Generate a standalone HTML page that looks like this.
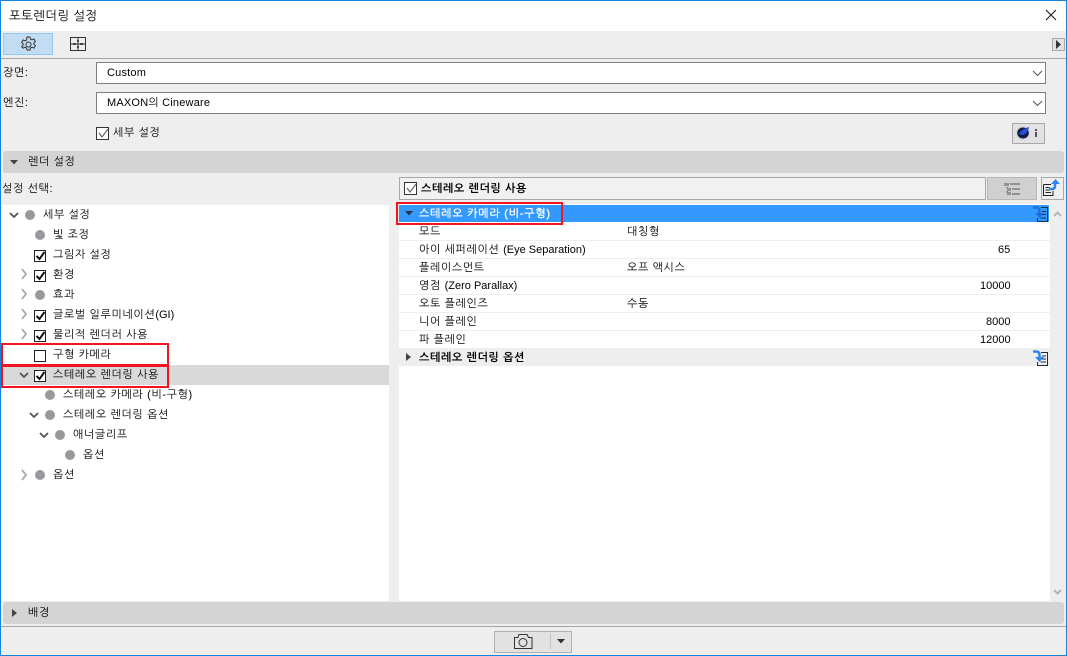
<!DOCTYPE html>
<html lang="ko"><head><meta charset="utf-8">
<style>
html,body{margin:0;padding:0;background:#fff}
#w{position:relative;width:1067px;height:656px;overflow:hidden;background:#eee;font:11px "Liberation Sans","NanumGothic","Noto Sans CJK KR",sans-serif;color:#000}
#w div,#w svg{position:absolute}
.t{white-space:nowrap;line-height:14px;height:14px;letter-spacing:.62px;margin-top:1px}
.t span{letter-spacing:0}
.b{font-weight:bold}
.box{background:#fff;border:1px solid #222;width:10px;height:10px}
.box2{background:#fff;border:1px solid #333;width:11px;height:11px}
.dot{width:10px;height:10px;border-radius:50%;background:#97999c}
.sep{left:399px;width:651px;height:1px;background:#eeeeee}
.red{border:2px solid #f2141e;box-sizing:border-box}
</style></head><body><div id="w">
<div style="left:0;top:0;width:1067px;height:31px;background:#fff"></div>
<div class="t" style="left:9px;top:8px;font-size:12.5px;letter-spacing:.35px">포토렌더링 설정</div>
<svg style="left:1045px;top:9px" width="12" height="12"><path d="M1 1L11 11M11 1L1 11" stroke="#111" stroke-width="1"/></svg>
<div style="left:3px;top:33px;width:48px;height:20px;background:#c1dcf3;border:1px solid #90c8f6"></div>
<svg style="left:20px;top:36px" width="17" height="17" viewBox="0 0 17 17" fill="none" stroke="#333" stroke-width="1"><path d="M7 1h3l.4 2 1.6.8 1.9-.9 1.5 2.5-1.5 1.3v1.6l1.5 1.3-1.5 2.5-1.9-.9-1.6.8-.4 2H7l-.4-2-1.6-.8-1.900.9L1.600 10.600l1.500-1.300V7.700L1.600 6.400l1.500-2.500 1.900.9 1.600-.8z"/><circle cx="8.500" cy="8.500" r="2.500"/></svg>
<svg style="left:70px;top:37px" width="17" height="15" viewBox="0 0 17 15" fill="none" stroke="#333"><rect x=".5" y=".5" width="15" height="13"/><path d="M.5 7h15M8 .5v13"/><path d="M3 7h3M10 7h3M8 3v2M8 9v2" stroke-width="2" stroke="#444"/></svg>
<div style="left:1052px;top:38px;width:11px;height:11px;border:1px solid #a8a8a8;background:#e2e2e2"></div>
<svg style="left:1056px;top:40px" width="6" height="9"><path d="M0 0L5 4.500L0 9z" fill="#333"/></svg>
<div style="left:0;top:58px;width:1067px;height:1px;background:#a5a5a5"></div>

<div class="t" style="left:3px;top:65px">장면:</div>
<div style="left:96px;top:62px;width:948px;height:20px;background:#fff;border:1px solid #7f7f7f"></div>
<div class="t" style="left:107px;top:65px;letter-spacing:.2px">Custom</div>
<svg style="left:1032px;top:70px" width="11" height="7"><path d="M1 1L5.500 5.500L10 1" fill="none" stroke="#555"/></svg>
<div class="t" style="left:3px;top:95px">엔진:</div>
<div style="left:96px;top:92px;width:948px;height:20px;background:#fff;border:1px solid #7f7f7f"></div>
<div class="t" style="left:107px;top:95px;letter-spacing:.2px">MAXON의 Cineware</div>
<svg style="left:1032px;top:100px" width="11" height="7"><path d="M1 1L5.500 5.500L10 1" fill="none" stroke="#555"/></svg>
<div class="box2" style="left:96px;top:127px"></div>
<svg style="left:97px;top:128px" width="12" height="11"><path d="M2 5L5 9L11 1" fill="none" stroke="#666" stroke-width="1.200"/></svg>
<div class="t" style="left:113px;top:125px">세부 설정</div>
<div style="left:1012px;top:123px;width:31px;height:19px;background:#e2e2e2;border:1px solid #a8a8a8"></div>
<svg style="left:1016px;top:126px" width="15" height="15"><circle cx="7" cy="7" r="7" fill="#cfd4de"/><ellipse cx="7" cy="7" rx="5.800" ry="5.500" fill="#131c44"/><path d="M2.500 8Q7 2.500 13 1Q12 7 7 9z" fill="#2b50d8"/></svg>
<div style="left:1035px;top:129px;width:2px;height:2px;background:#555"></div>
<div style="left:1035px;top:132px;width:2px;height:5px;background:#555"></div>

<div style="left:3px;top:151px;width:1061px;height:22px;background:#d4d4d4;border-radius:3px"></div>
<svg style="left:10px;top:160px" width="8" height="5"><path d="M0 0H8L4 4.500z" fill="#444"/></svg>
<div class="t" style="left:28px;top:154px">렌더 설정</div>
<div class="t" style="left:2px;top:181px">설정 선택:</div>

<div style="left:2px;top:205px;width:387px;height:396px;background:#fff"></div>
<div style="left:2px;top:365px;width:387px;height:20px;background:#d9d9d9"></div>

<svg style="left:0;top:205px" width="200" height="280" fill="none" stroke-width="1.800">
<g stroke="#555"><path d="M10 8L14 12L18 8"/><path d="M20 168L24 172L28 168"/><path d="M30 208L34 212L38 208"/><path d="M40 228L44 232L48 228"/></g>
<g stroke="#a8a8a8"><path d="M22 64L26 69L22 74"/><path d="M22 84L26 89L22 94"/><path d="M22 104L26 109L22 114"/><path d="M22 124L26 129L22 134"/><path d="M22 265L26 270L22 275"/></g>
</svg>
<div class="dot" style="left:25px;top:210px"></div>
<div class="t" style="left:43px;top:207px">세부 설정</div>
<div class="dot" style="left:35px;top:230px"></div>
<div class="t" style="left:53px;top:227px">빛 조정</div>
<div class="box" style="left:34px;top:250px"></div>
<div class="t" style="left:53px;top:247px">그림자 설정</div>
<div class="box" style="left:34px;top:270px"></div>
<div class="t" style="left:53px;top:267px">환경</div>
<div class="dot" style="left:35px;top:290px"></div>
<div class="t" style="left:53px;top:287px">효과</div>
<div class="box" style="left:34px;top:310px"></div>
<div class="t" style="left:53px;top:307px">글로벌 일루미네이션<span>(GI)</span></div>
<div class="box" style="left:34px;top:330px"></div>
<div class="t" style="left:53px;top:327px">물리적 렌더러 사용</div>
<div class="box" style="left:34px;top:350px"></div>
<div class="t" style="left:53px;top:347px">구형 카메라</div>
<div class="box" style="left:34px;top:370px"></div>
<div class="t" style="left:53px;top:367px">스테레오 렌더링 사용</div>
<div class="dot" style="left:45px;top:390px"></div>
<div class="t" style="left:63px;top:387px">스테레오 카메라 (비-구형)</div>
<div class="dot" style="left:45px;top:410px"></div>
<div class="t" style="left:63px;top:407px">스테레오 렌더링 옵션</div>
<div class="dot" style="left:55px;top:430px"></div>
<div class="t" style="left:73px;top:427px">애너글리프</div>
<div class="dot" style="left:65px;top:450px"></div>
<div class="t" style="left:83px;top:447px">옵션</div>
<div class="dot" style="left:35px;top:470px"></div>
<div class="t" style="left:53px;top:467px">옵션</div>
<svg style="left:0;top:0" width="60" height="400" fill="none" stroke="#111" stroke-width="2"><path d="M36.500 256L39.500 259L44.500 252"/><path d="M36.500 276L39.500 279L44.500 272"/><path d="M36.500 316L39.500 319L44.500 312"/><path d="M36.500 336L39.500 339L44.500 332"/><path d="M36.500 376L39.500 379L44.500 372"/></svg>

<div style="left:399px;top:177px;width:585px;height:21px;background:#f1f1f1;border:1px solid #a8a8a8"></div>
<div class="box2" style="left:404px;top:182px"></div>
<svg style="left:405px;top:183px" width="12" height="11"><path d="M2 5L5 9L11 1" fill="none" stroke="#666" stroke-width="1.200"/></svg>
<div class="t b" style="left:421px;top:181px">스테레오 렌더링 사용</div>
<div style="left:987px;top:177px;width:48px;height:21px;background:#d0d0d0;border:1px solid #b8b8b8"></div>
<svg style="left:1003px;top:182px" width="18" height="14" fill="#929292"><rect x="1" y="1" width="5" height="3"/><rect x="7" y="1" width="10" height="2"/><rect x="3" y="5" width="2" height="1"/><rect x="4" y="6" width="4" height="3"/><rect x="9" y="6" width="8" height="2"/><rect x="3" y="9" width="2" height="2"/><rect x="4" y="10" width="4" height="3"/><rect x="9" y="11" width="8" height="2"/></svg>
<div style="left:1041px;top:177px;width:21px;height:21px;background:#eee;border:1px solid #a8a8a8"></div>
<svg style="left:1043px;top:178px" width="18" height="20" fill="none"><path d="M.500 6.500H8M.500 6.500V17.500H10V13" stroke="#222"/><path d="M2.500 9.500H6.500M2.500 12H6.500M2.500 14.500H8" stroke="#222"/><path d="M6 11H9Q12 11 12 8V4" stroke="#2f86f0" stroke-width="2.500"/><path d="M8 6L12.500 1L17 6z" fill="#2f86f0"/></svg>

<div style="left:399px;top:204px;width:651px;height:397px;background:#fff"></div>
<div style="left:399px;top:205px;width:650px;height:17px;background:#3399ff"></div>
<svg style="left:405px;top:211px" width="8" height="5"><path d="M0 0H8L4 4.500z" fill="#333"/></svg>
<div class="t b" style="left:419px;top:206px;color:#fff;font-weight:normal;letter-spacing:.75px;-webkit-text-stroke:.3px #fff">스테레오 카메라 (비-구형)</div>
<svg style="left:1032px;top:205px" width="17" height="17" fill="none"><path d="M9 2.500H15.500V16.500H5.500V13" stroke="#1b2d44"/><path d="M10 6.500H14M10 9.500H14M8.500 13H14" stroke="#1b2d44"/><path d="M1 2.500H4Q7.500 2.500 7.500 6V9" stroke="#1d6fe0" stroke-width="2.500"/><path d="M3 8H12L7.500 13z" fill="#1d6fe0"/></svg>

<div class="sep" style="top:240px"></div><div class="sep" style="top:258px"></div><div class="sep" style="top:276px"></div><div class="sep" style="top:294px"></div><div class="sep" style="top:312px"></div><div class="sep" style="top:330px"></div>
<div class="t" style="left:419px;top:224px">모드</div>
<div class="t" style="left:627px;top:224px">대칭형</div>
<div class="t" style="left:419px;top:242px">아이 세퍼레이션 <span>(Eye Separation)</span></div>
<div class="t" style="left:998px;top:242px;letter-spacing:0">65</div>
<div class="t" style="left:419px;top:260px">플레이스먼트</div>
<div class="t" style="left:627px;top:260px">오프 액시스</div>
<div class="t" style="left:419px;top:278px">영점 <span>(Zero Parallax)</span></div>
<div class="t" style="left:980px;top:278px;letter-spacing:0">10000</div>
<div class="t" style="left:419px;top:296px">오토 플레인즈</div>
<div class="t" style="left:627px;top:296px">수동</div>
<div class="t" style="left:419px;top:314px">니어 플레인</div>
<div class="t" style="left:986px;top:314px;letter-spacing:0">8000</div>
<div class="t" style="left:419px;top:332px">파 플레인</div>
<div class="t" style="left:980px;top:332px;letter-spacing:0">12000</div>
<div style="left:399px;top:348px;width:651px;height:18px;background:#eee"></div>
<svg style="left:406px;top:353px" width="5" height="8"><path d="M0 0L5 4L0 8z" fill="#444"/></svg>
<div class="t b" style="left:419px;top:350px">스테레오 렌더링 옵션</div>
<svg style="left:1032px;top:349px" width="17" height="17" fill="none"><path d="M9 3.500H15.500V16.500H5.500V13" stroke="#1b2d44"/><path d="M10 7H14M10 10H14M8.500 13H14" stroke="#1b2d44"/><path d="M1 2.500H4Q7.500 2.500 7.500 6V9" stroke="#2f86f0" stroke-width="2.500"/><path d="M3 8H12L7.500 13z" fill="#2f86f0"/></svg>

<div style="left:1050px;top:204px;width:14px;height:397px;background:#eee"></div>
<svg style="left:1053px;top:211px" width="9" height="6"><path d="M1 5L4.500 1.500L8 5" fill="none" stroke="#b5b5b5" stroke-width="2"/></svg>
<svg style="left:1053px;top:589px" width="9" height="6"><path d="M1 1L4.500 4.500L8 1" fill="none" stroke="#b5b5b5" stroke-width="2"/></svg>

<div class="red" style="left:1px;top:343px;width:168px;height:23px"></div>
<div class="red" style="left:1px;top:365px;width:168px;height:23px"></div>
<div class="red" style="left:396px;top:202px;width:167px;height:23px"></div>

<div style="left:3px;top:602px;width:1061px;height:22px;background:#d4d4d4;border-radius:3px"></div>
<svg style="left:12px;top:609px" width="5" height="8"><path d="M0 0L5 4L0 8z" fill="#444"/></svg>
<div class="t" style="left:28px;top:605px">배경</div>
<div style="left:0;top:626px;width:1067px;height:1px;background:#a5a5a5"></div>
<div style="left:494px;top:631px;width:76px;height:20px;background:#e2e2e2;border:1px solid #b0b0b0"></div>
<svg style="left:514px;top:633px" width="19" height="17" fill="none" stroke="#333"><path d="M.500 4.500H4L5 1.500H13L14.500 4.500H18V15.500H.500z"/><circle cx="9" cy="9.500" r="4"/></svg>
<div style="left:550px;top:633px;width:1px;height:16px;background:#c4c4c4"></div>
<svg style="left:557px;top:639px" width="8" height="5"><path d="M0 0H8L4 4.500z" fill="#333"/></svg>

<div style="left:0;top:0;width:1067px;height:1px;background:#1883d7"></div>
<div style="left:0;top:0;width:1px;height:656px;background:#1883d7"></div>
<div style="left:1066px;top:0;width:1px;height:656px;background:#1883d7"></div>
<div style="left:0;top:655px;width:1067px;height:1px;background:#1883d7"></div>
</div></body></html>
